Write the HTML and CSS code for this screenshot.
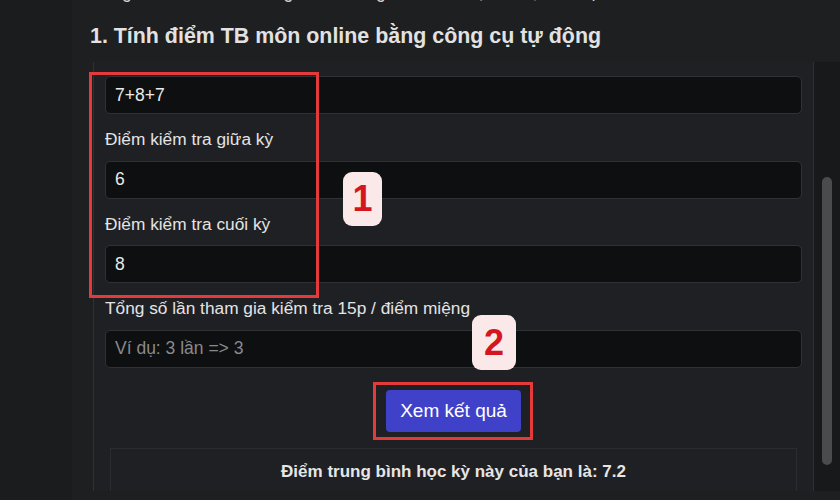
FILE: index.html
```html
<!DOCTYPE html>
<html lang="vi">
<head>
<meta charset="utf-8">
<title>Tính điểm TB môn</title>
<link rel="stylesheet" href="styles.css">
</head>
<body>
<div class="page">
  <div class="gutter"></div>
  <main class="article">
    <p class="lead">Công thức tính điểm trung bình môn gồm nhiều loại điểm, xem cụ thể bên dưới</p>
    <h2 class="title">1. Tính điểm TB môn online bằng công cụ tự động</h2>
    <div class="frame">
      <div class="frame-body">
        <label class="field-label clipped">Nhập điểm kiểm tra thường xuyên (cách nhau bằng dấu +)</label>
        <input class="field" type="text" value="7+8+7">
        <label class="field-label">Điểm kiểm tra giữa kỳ</label>
        <input class="field" type="text" value="6">
        <label class="field-label">Điểm kiểm tra cuối kỳ</label>
        <input class="field" type="text" value="8">
        <label class="field-label">Tổng số lần tham gia kiểm tra 15p / điểm miệng</label>
        <input class="field last" type="text" placeholder="Ví dụ: 3 lần =&gt; 3">
        <div class="actions">
          <button class="btn" type="button">Xem kết quả</button>
        </div>
        <div class="result">Điểm trung bình học kỳ này của bạn là: 7.2</div>
      </div>
      <div class="scrollbar"><div class="thumb"></div></div>
    </div>
  </main>
</div>
<div class="mark mark-1"></div>
<div class="mark mark-2"></div>
<div class="badge badge-1">1</div>
<div class="badge badge-2">2</div>
</body>
</html>
```
FILE: styles.css
```css
* { box-sizing: border-box; }
html, body {
  margin: 0;
  width: 840px;
  height: 500px;
  overflow: hidden;
  background: #1b1c1e;
  font-family: "Liberation Sans", Arial, sans-serif;
}
.page {
  display: flex;
  height: 500px;
}
.gutter {
  width: 72px;
  flex: none;
  background: #1b1c1e;
}
.article {
  flex: 1;
  background: #1e1f21;
  padding-left: 18px;
  overflow: hidden;
}
.lead {
  margin: -18px 0 0 0;
  font-size: 17.5px;
  line-height: 20px;
  height: 20px;
  color: #cfcfcf;
  white-space: nowrap;
  overflow: hidden;
}
.title {
  margin: 21px 0 13px 0;
  font-size: 21.4px;
  line-height: 26px;
  font-weight: bold;
  color: #e2e2e2;
  white-space: nowrap;
}
.frame {
  margin-left: 3px;
  height: 429px;
  display: flex;
}
.frame-body {
  flex: 1;
  border-left: 1px solid #2f3033;
  border-right: 1px solid #2f3033;
  background: #1f2023;
  padding: 0 11px;
  overflow: hidden;
  display: flex;
  flex-direction: column;
}
.field-label {
  display: block;
  font-size: 17.3px;
  line-height: 24px;
  color: #e4e4e4;
  margin-bottom: 9.5px;
  white-space: nowrap;
}
.field-label.clipped {
  margin-top: -21px;
  margin-bottom: 11px;
}
.field {
  display: block;
  width: 100%;
  height: 38px;
  flex: none;
  margin: 0 0 13px 0;
  padding: 0 9px;
  background: #0e0f11;
  border: 1px solid #303135;
  border-radius: 5px;
  color: #eaeaea;
  font-family: "Liberation Sans", Arial, sans-serif;
  font-size: 17.5px;
  outline: none;
}
.field::placeholder {
  color: #8a8a8a;
}
.field.last {
  margin-bottom: 0;
}
.actions {
  display: flex;
  justify-content: center;
  margin-top: 22.5px;
}
.btn {
  height: 42px;
  padding: 0 14.5px;
  border: none;
  border-radius: 4px;
  background: #3f42c8;
  color: #ffffff;
  font-family: "Liberation Sans", Arial, sans-serif;
  font-size: 19px;
}
.result {
  margin: 16px 5px 0 5px;
  flex: none;
  height: 80px;
  border: 1px solid #2b2c2f;
  background: #1f2023;
  padding-top: 13px;
  text-align: center;
  font-size: 17px;
  line-height: 20px;
  font-weight: bold;
  color: #e6e6e6;
}
.scrollbar {
  width: 26px;
  flex: none;
  background: #18191b;
  padding: 115px 0 0 8px;
}
.thumb {
  width: 10px;
  height: 288px;
  border-radius: 5px;
  background: #4a4b4d;
}
.mark {
  position: absolute;
  border: 3.5px solid #e43a3c;
}
.mark-1 {
  left: 89px;
  top: 72px;
  width: 230px;
  height: 226px;
}
.mark-2 {
  left: 373px;
  top: 382px;
  width: 160px;
  height: 58px;
}
.badge {
  position: absolute;
  background: #fbe8e8;
  border-radius: 9px;
  color: #d3161f;
  font-weight: bold;
  font-size: 36px;
  display: flex;
  align-items: center;
  justify-content: center;
}
.badge-1 {
  left: 343px;
  top: 172px;
  width: 39px;
  height: 54px;
}
.badge-2 {
  left: 472px;
  top: 315px;
  width: 44px;
  height: 55px;
}
```
